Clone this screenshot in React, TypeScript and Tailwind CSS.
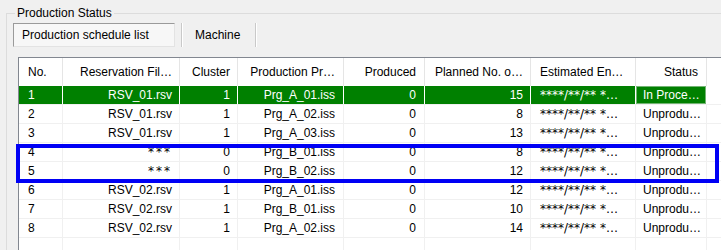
import React from "react";

const COLS =
  "grid grid-cols-[44px_117px_58px_106px_81px_106px_105px_71px_1fr]";

const headerAlign = [
  "justify-start pl-[9px]",
  "justify-end pr-[7px]",
  "justify-end pr-[7px]",
  "justify-end pr-[8px]",
  "justify-end pr-[8px]",
  "justify-end pr-[7px]",
  "justify-start pl-[9px]",
  "justify-end pr-[8px]",
  "",
];

const cellAlign = [
  "text-left pl-[9px]",
  "text-right pr-[7px]",
  "text-right pr-[7px]",
  "text-right pr-[8px]",
  "text-right pr-[8px]",
  "text-right pr-[7px]",
  "text-left pl-[9px]",
  "text-left pl-[7px]",
  "",
];

const headers = [
  "No.",
  "Reservation Fil…",
  "Cluster",
  "Production Pr…",
  "Produced",
  "Planned No. o…",
  "Estimated En…",
  "Status",
  "",
];

type Row = {
  no: string;
  rsv: string;
  cluster: string;
  prg: string;
  produced: string;
  planned: string;
  status: string;
};

const rows: Row[] = [
  { no: "1", rsv: "RSV_01.rsv", cluster: "1", prg: "Prg_A_01.iss", produced: "0", planned: "15", status: "In Proce…" },
  { no: "2", rsv: "RSV_01.rsv", cluster: "1", prg: "Prg_A_02.iss", produced: "0", planned: "8", status: "Unprodu…" },
  { no: "3", rsv: "RSV_01.rsv", cluster: "1", prg: "Prg_A_03.iss", produced: "0", planned: "13", status: "Unprodu…" },
  { no: "4", rsv: "***", cluster: "0", prg: "Prg_B_01.iss", produced: "0", planned: "8", status: "Unprodu…" },
  { no: "5", rsv: "***", cluster: "0", prg: "Prg_B_02.iss", produced: "0", planned: "12", status: "Unprodu…" },
  { no: "6", rsv: "RSV_02.rsv", cluster: "1", prg: "Prg_A_01.iss", produced: "0", planned: "12", status: "Unprodu…" },
  { no: "7", rsv: "RSV_02.rsv", cluster: "1", prg: "Prg_B_01.iss", produced: "0", planned: "10", status: "Unprodu…" },
  { no: "8", rsv: "RSV_02.rsv", cluster: "1", prg: "Prg_A_02.iss", produced: "0", planned: "14", status: "Unprodu…" },
];

// asterisks in the original font are wide, DejaVu gets closer
const starFont = "[font-family:'DejaVu_Sans',sans-serif]";

const ListRow = ({ row, selected }: { row?: Row; selected?: boolean }) => {
  const values = row
    ? [row.no, row.rsv, row.cluster, row.prg, row.produced, row.planned, "****/**/** *…", row.status, ""]
    : ["", "", "", "", "", "", "", "", ""];

  return (
    <div className={`${COLS} h-[19px] border-b border-[#f0f0f0]`}>
      {values.map((v, i) => {
        const isFiller = i === values.length - 1;
        const green = selected && !isFiller;
        const stars = i === 6 || v === "***";
        return (
          <div
            key={i}
            className={`h-[18px] overflow-hidden whitespace-nowrap leading-[18px] ${cellAlign[i]} ${
              isFiller ? "" : "border-r"
            } ${green ? "border-white bg-[#008000] text-white" : "border-[#f0f0f0] text-black"} ${
              green && i === 7 ? "shadow-[inset_0_0_0_1px_#73b473]" : ""
            } ${stars ? starFont : ""} ${v === "***" ? "tracking-[2px]" : ""}`}
          >
            {v}
          </div>
        );
      })}
    </div>
  );
};

export default function App() {
  return (
    <div className="relative h-[250px] w-[721px] overflow-hidden bg-[#f0f0f0] text-[12px] text-black [font-family:'Liberation_Sans',Arial,sans-serif]">
      <fieldset className="ml-[6px] mt-[5px] w-[760px] border border-[#dcdcdc] pl-[6px]">
        <legend className="ml-[2px] px-[2px] leading-[16px]">Production Status</legend>

        {/* tab buttons */}
        <div className="mt-[2px] flex h-[24px] items-stretch">
          <div className="flex w-[162px] items-center border border-b-[#e3e3e3] border-l-[#9a9a9a] border-r-[#e3e3e3] border-t-[#9a9a9a] bg-[#f7f7f7] pl-[8px]">
            Production schedule list
          </div>
          <div className="ml-[6px] w-[2px] border-l border-r border-l-[#c9c9c9] border-r-white" />
          <div className="flex w-[72px] items-center pl-[12px]">Machine</div>
          <div className="w-[2px] border-l border-r border-l-[#c9c9c9] border-r-white" />
        </div>

        {/* list view */}
        <div className="ml-[5px] mt-[10px] h-[220px] border-l border-t border-[#828790] bg-white">
          <div className={`${COLS} h-[28px]`}>
            {headers.map((h, i) => (
              <div
                key={i}
                className={`flex items-center whitespace-nowrap ${headerAlign[i]} ${
                  i === headers.length - 1 ? "" : "border-r border-[#e5e5e5]"
                }`}
              >
                {h}
              </div>
            ))}
          </div>
          {rows.map((r, i) => (
            <ListRow key={r.no} row={r} selected={i === 0} />
          ))}
          <ListRow />
          <ListRow />
        </div>
      </fieldset>

      {/* highlight frame */}
      <div className="absolute left-[16px] top-[144px] h-[39px] w-[703px] border-4 border-[#0000f5]" />
    </div>
  );
}
